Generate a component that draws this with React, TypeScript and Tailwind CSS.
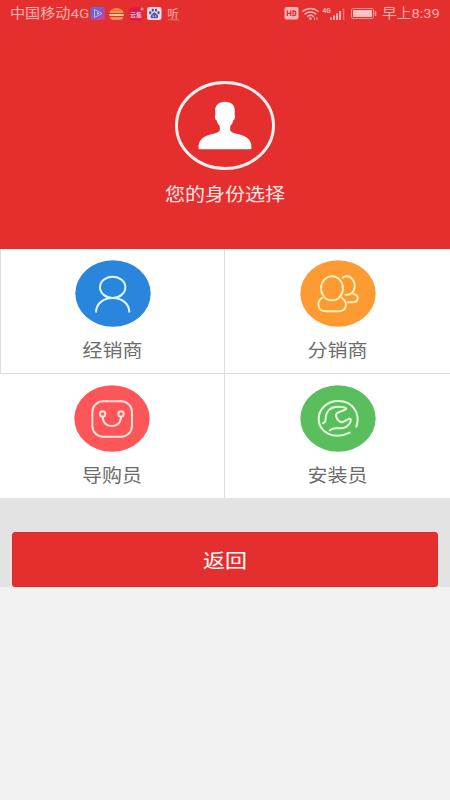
import type { ReactNode } from "react";

const FONT = "font-['Roboto','Noto_Sans_CJK_SC',sans-serif]";

// ---------------------------------------------------------- status bar

function AppIcons() {
  return (
    <svg width="92" height="16" viewBox="0 0 92 16" fill="none">
      {/* video player */}
      <defs>
        <linearGradient id="player" x1="0" y1="0" x2="1" y2="1">
          <stop offset="0" stopColor="#3f7bea" />
          <stop offset=".5" stopColor="#8b55c8" />
          <stop offset="1" stopColor="#d5408f" />
        </linearGradient>
      </defs>
      <rect x="0.5" y="1" width="14.500" height="13" rx="3" fill="url(#player)" />
      <path d="M4.500 3.500 12 7.500 4.500 11.500Z" stroke="#a5bdf8" strokeLinejoin="round" />
      <path d="M7 6v3L9.600 7.500z" fill="#b5c5fa" />
      {/* burger */}
      <path d="M19.500 7C20 .5 33 .5 33.500 7Z" fill="#f39a45" />
      <path d="M22 4.500h9" stroke="#e86a3f" />
      <rect x="19" y="8" width="15" height="2" rx="1" fill="#f7c7a0" />
      <path d="M20 11h13c0 2-1 3-3 3h-7c-2 0-3-1-3-3Z" fill="#f08d61" />
      {/* cloud music */}
      <rect x="39.500" y="1.500" width="13" height="13" rx="3" fill="#df174b" />
      <circle cx="52" cy="3" r="1.500" fill="#f8a1a5" />
      <text
        x="40"
        y="10.500"
        fontSize="6"
        fontWeight="700"
        fill="#ffc8cd"
        fontFamily="Noto Sans CJK SC, sans-serif"
      >
        云集
      </text>
      {/* paw */}
      <rect x="57" y="1" width="14.500" height="13" rx="2.500" fill="#f8dce0" />
      <g fill="#4656b8">
        <ellipse cx="60.300" cy="6.700" rx="1.200" ry="1.600" />
        <ellipse cx="62.800" cy="4.100" rx="1.200" ry="1.700" />
        <ellipse cx="66" cy="4.100" rx="1.200" ry="1.700" />
        <ellipse cx="68.500" cy="6.700" rx="1.200" ry="1.600" />
        <path d="M64.400 6.500c1.400 0 1.700 1.400 2.900 2.300 1.700 1.400.8 3.500-.9 3.500h-4c-1.700 0-2.600-2.100-.9-3.500 1.200-.9 1.500-2.300 2.900-2.300Z" />
      </g>
      <path d="M63 9v2h1.200m1.200-2v2h1" stroke="#f8dce0" strokeWidth=".6" />
      {/* listening app */}
      <text
        x="77.300"
        y="11.500"
        fontSize="11.500"
        fontWeight="500"
        fill="#f7a3a3"
        fontFamily="Noto Sans CJK SC, sans-serif"
      >
        听
      </text>
      <path d="M78 13.800h11" stroke="#ee6e6e" />
    </svg>
  );
}

function SignalIcons() {
  return (
    <svg width="94" height="16" viewBox="0 0 94 16" fill="none">
      <rect x="0.500" y="1" width="14" height="12.500" rx="2" fill="#f9b5b4" />
      <path
        d="M3.300 4.500v5.500m3.400-5.500v5.500m-3.400-2.700h3.400M9 5v4.500h1c2.400 0 2.400-4.500 0-4.500Z"
        stroke="#d63436"
        strokeWidth="1.300"
      />
      {/* wifi */}
      <g stroke="#f9b5b4" strokeWidth="1.400" strokeLinecap="round">
        <path d="M18.800 5.300c4.200-3.700 11-3.700 15.200 0" />
        <path d="M21 8c3-2.600 7.800-2.600 10.800 0" />
        <path d="M23.500 10.400c1.700-1.400 4.100-1.400 5.800 0" />
      </g>
      <circle cx="26.400" cy="12.600" r="1.300" fill="#f9b5b4" />
      <path d="M30.500 11v3m2.500-3v3" stroke="#f49a9a" />
      <text x="38.500" y="6.500" fontSize="6.500" fontWeight="700" fill="#f9b5b4" fontFamily="Roboto, sans-serif">
        4G
      </text>
      {/* signal bars */}
      <path
        d="M47 11.500V14m3-4.500V14m3-6.500V14m3-9V14"
        stroke="#f9b5b4"
        strokeWidth="1.900"
      />
      <path d="M59.600 2.500V14" stroke="#ee7272" strokeWidth="1.400" />
      {/* battery */}
      <rect x="67.500" y="2.500" width="22" height="10" rx="1.500" stroke="#f48d8d" />
      <rect x="69" y="4" width="19" height="7" fill="#fbc2c0" />
      <path d="M91.500 5v5" stroke="#f9a9a8" strokeWidth="1.500" />
    </svg>
  );
}

function StatusBar() {
  return (
    <div className="flex h-7 items-center justify-between pr-[9px] pl-[10px] text-[#f9afae]">
      <div className="flex items-center">
        <span className="w-[80px] text-[13.5px] leading-none whitespace-nowrap">
          <span className="inline-block origin-left scale-x-[1.12]">中国移动4G</span>
        </span>
        <AppIcons />
      </div>
      <div className="flex items-center">
        <SignalIcons />
        <span className="ml-1 w-[59px] text-[13.5px] leading-none whitespace-nowrap">
          <span className="inline-block origin-left scale-x-[1.09]">早上8:39</span>
        </span>
      </div>
    </div>
  );
}

// --------------------------------------------------------------- icons

function Avatar() {
  return (
    <svg width="102" height="92" viewBox="0 0 102 92" fill="none">
      <ellipse cx="51" cy="45.500" rx="48.500" ry="43" stroke="#fff0ee" strokeWidth="3" />
      <path
        d="M51 21.700c-6.500 0-10 3.500-9.800 9 0 1.700.1 3 .2 4.300-1 1-.5 4.500 1.200 5.300.5 2.400 1.600 4.200 3.200 5.700v4.500c-1.500 3-8.300 3-13.800 5.500-5 2.200-7.500 6-7.500 11.500 0 1.200.6 1.800 1.800 1.800h49.400c1.200 0 1.800-.6 1.800-1.800 0-5.500-2.500-9.300-7.500-11.500-5.500-2.500-12.300-2.500-13.800-5.500V46c1.600-1.500 2.700-3.300 3.200-5.700 1.700-.8 2.200-4.300 1.200-5.300.1-1.300.2-2.600.2-4.300.2-5.500-3.300-9-9.800-9Z"
        fill="#fff"
      />
    </svg>
  );
}

function RoleIcon({ color, stroke, children }: { color: string; stroke: string; children: ReactNode }) {
  return (
    <svg width="76" height="67" viewBox="0 0 228 201" fill="none">
      <ellipse cx="114" cy="100.500" rx="113" ry="100" fill={color} />
      <g stroke={stroke} strokeWidth="6" strokeLinecap="round" strokeLinejoin="round">
        {children}
      </g>
    </svg>
  );
}

const DealerIcon = () => (
  <RoleIcon color="#2a86dd" stroke="#def6ff">
    <ellipse cx="113" cy="82" rx="38" ry="32" />
    <path d="M63 155c3-55 97-55 100 0" />
  </RoleIcon>
);

const DistributorIcon = () => (
  <RoleIcon color="#fd9a31" stroke="#ffeeb8">
    <ellipse cx="96" cy="85" rx="33" ry="36" />
    <path d="M66 114c-16 10-16 40 13 40h36c27 0 29-28 11-40" />
    <path d="M128 53c14-11 36 0 36 25 0 19-13 29-28 26" />
    <path d="M160 102c19 4 17 25-3 25h-13" />
  </RoleIcon>
);

const GuideIcon = () => (
  <RoleIcon color="#fd5658" stroke="#ffe2dc">
    <rect x="55" y="49" width="119" height="106" rx="32" />
    <circle cx="86" cy="87" r="8" />
    <circle cx="141" cy="87" r="8" />
    <path d="M86 97c2 35 53 35 55 0" />
  </RoleIcon>
);

const InstallerIcon = () => (
  <RoleIcon color="#5abe5d" stroke="#e2ffdc">
    <path d="M169 125c14-41-12-77-54-77-33 0-59 24-59 53 0 42 48 65 93 42" />
    <path d="M69 115c7-2 8-7 8-15 1-23 17-35 35-35 10 0 22 1 26 5 2 3-5 5-12 8-10 4-18 6-18 12 0 9 8 18 15 22 7 0 17-8 25-11 5-1 6 4 2 12-7 12-17 18-33 17-8-1-22 0-28 6" />
  </RoleIcon>
);

// ---------------------------------------------------------------- page

const ROLES = [
  { label: "经销商", icon: <DealerIcon />, className: "border-r border-b border-l" },
  { label: "分销商", icon: <DistributorIcon />, className: "border-b" },
  { label: "导购员", icon: <GuideIcon />, className: "border-r" },
  { label: "安装员", icon: <InstallerIcon />, className: "" },
];

export default function App() {
  return (
    <div className={`flex h-[800px] w-[450px] flex-col overflow-hidden bg-[#f2f2f2] ${FONT}`}>
      <header className="h-[249px] shrink-0 bg-[#e52f2f]">
        <StatusBar />
        <div className="flex flex-col items-center pt-[52px]">
          <Avatar />
          <h1 className="mt-[11px] scale-y-90 text-[20px] leading-6 font-normal text-[#ffe6e4]">
            您的身份选择
          </h1>
        </div>
      </header>

      <main className="grid shrink-0 grid-cols-2 bg-white">
        {ROLES.map((role) => (
          <button
            key={role.label}
            className={`flex h-[124.5px] flex-col items-center border-[#dedede] pt-[11px] ${role.className}`}
          >
            {role.icon}
            <span className="mt-3 scale-y-90 text-[20px] leading-6 font-normal text-[#6c6c6c]">
              {role.label}
            </span>
          </button>
        ))}
      </main>

      <div className="h-[89px] shrink-0 bg-[#e3e3e3] px-3 pt-[34px]">
        <button className="h-[55px] w-[426px] rounded-[3px] border border-[#d9292d] bg-[#e52f2f] pt-1.5 text-white">
          <span className="inline-block scale-y-90 text-[22px] leading-6">返回</span>
        </button>
      </div>
    </div>
  );
}
